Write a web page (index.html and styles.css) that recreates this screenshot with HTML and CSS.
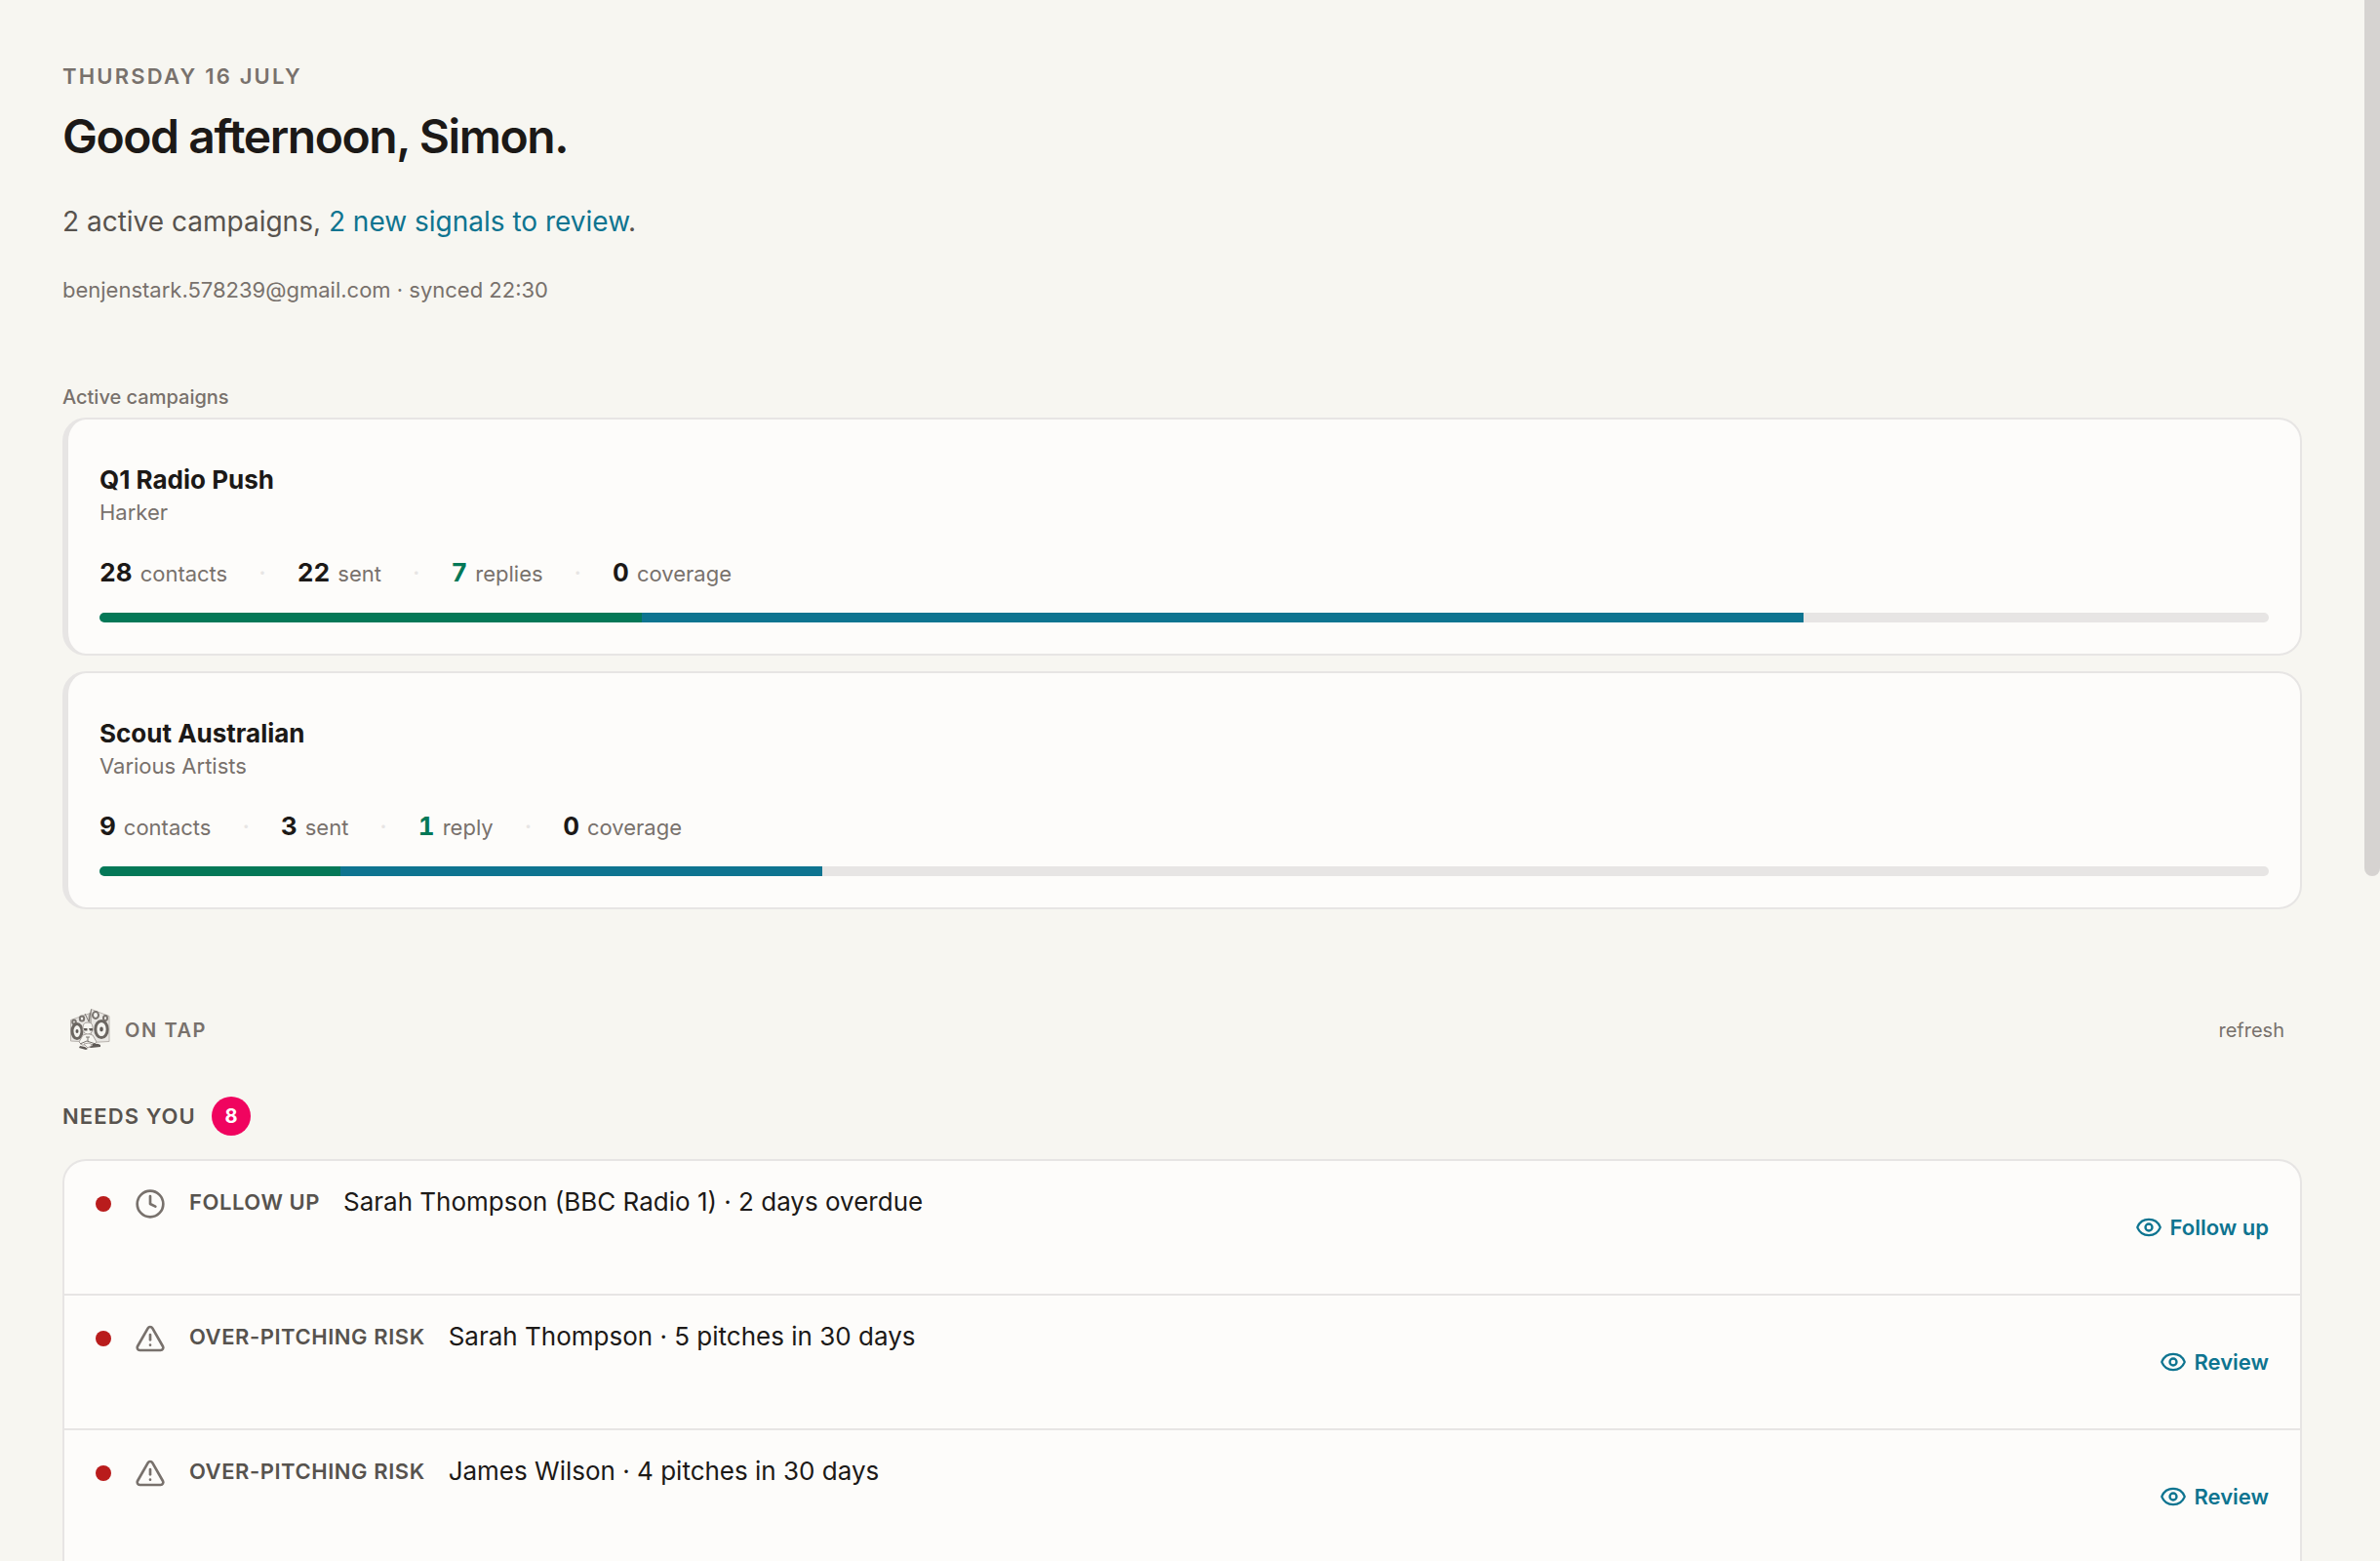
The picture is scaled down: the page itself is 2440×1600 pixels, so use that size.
FILE: index.html
```html
<!DOCTYPE html>
<html lang="en">
<head>
<meta charset="utf-8">
<title>Dashboard</title>
<link rel="stylesheet" href="styles.css">
</head>
<body>
<svg class="sprite" aria-hidden="true">
  <symbol id="clock" viewBox="0 0 24 24"><circle cx="12" cy="12" r="10"/><path d="M12 6v6l4 2"/></symbol>
  <symbol id="alert" viewBox="0 0 24 24"><path d="m21.73 18-8-14a2 2 0 0 0-3.48 0l-8 14A2 2 0 0 0 4 21h16a2 2 0 0 0 1.73-3"/><path d="M12 9v4"/><path d="M12 17h.01"/></symbol>
  <symbol id="eye" viewBox="0 0 24 24"><path d="M2.062 12.348a1 1 0 0 1 0-.696 10.75 10.75 0 0 1 19.876 0 1 1 0 0 1 0 .696 10.75 10.75 0 0 1-19.876 0"/><circle cx="12" cy="12" r="3"/></symbol>
</svg>
<main class="page">
  <header class="intro">
    <p class="date">Thursday 16 July</p>
    <h1 class="greeting">Good afternoon, Simon.</h1>
    <p class="summary">2 active campaigns, <a href="#signals">2 new signals to review</a>.</p>
    <p class="account">benjenstark.578239@gmail.com · synced 22:30</p>
  </header>

  <section class="campaigns">
    <h2 class="section-label">Active campaigns</h2>
    <article class="campaign">
      <h3 class="campaign-name">Q1 Radio Push</h3>
      <p class="artist">Harker</p>
      <ul class="stats">
        <li><b>28</b> contacts</li>
        <li><b>22</b> sent</li>
        <li><b class="good">7</b> replies</li>
        <li><b>0</b> coverage</li>
      </ul>
      <div class="bar"><span class="replied" style="width:25%"></span><span class="sent" style="width:53.57%"></span></div>
    </article>
    <article class="campaign">
      <h3 class="campaign-name">Scout Australian</h3>
      <p class="artist">Various Artists</p>
      <ul class="stats">
        <li><b>9</b> contacts</li>
        <li><b>3</b> sent</li>
        <li><b class="good">1</b> reply</li>
        <li><b>0</b> coverage</li>
      </ul>
      <div class="bar"><span class="replied" style="width:11.11%"></span><span class="sent" style="width:22.22%"></span></div>
    </article>
  </section>

  <section class="tap">
    <div class="tap-head">
      <!-- Character sitting in front of two stacked speakers -->
      <svg class="mascot" viewBox="0 0 56 56" aria-hidden="true">
        <path class="cab" d="M8.500 17.500 27 11v29l-18.500 -1z"/>
        <path class="cab" d="M29.500 6.500 48 13.500v26l-18.500 1z"/>
        <path class="crack" d="m23 11 4 8 2.500-12.500M28 10v12"/>
        <g class="cone">
          <ellipse cx="12" cy="19.500" rx="1.800" ry="2.100"/>
          <ellipse cx="20" cy="16" rx="2.200" ry="2.500"/>
          <ellipse cx="34" cy="12.500" rx="3" ry="3.400"/>
          <ellipse cx="44" cy="15.500" rx="2" ry="2.600"/>
        </g>
        <g class="woofer">
          <ellipse cx="15" cy="29" rx="5" ry="7.500"/>
          <ellipse cx="40" cy="27" rx="6.200" ry="8.500"/>
        </g>
        <g class="cap">
          <ellipse cx="15" cy="29" rx="1.500" ry="2"/>
          <ellipse cx="40" cy="27" rx="1.800" ry="2.400"/>
        </g>
        <path class="body" d="M21 33q5-3 10 0l4 7-3 3H20l-3-3z"/>
        <path class="body" d="M21 25q0-5 5-5t5 5v3q-1 4-5 4t-5-4z"/>
        <path class="crack" d="M24 35h4m-2 0v4M18 42l7-3 9 3"/>
        <path class="dark" d="M21.500 26h4v2.500h-3zM27 26h4v2.500h-3z"/>
        <path class="dark" d="M30 42q6-1 9 1v2l-10 1-4-2z"/>
        <path class="dark" d="m18 44 5 1 3 2-2 1-7-2z"/>
        <path class="body" d="m22 42 5-1 4 2-5 3z"/>
      </svg>
      <h2 class="tap-title">On tap</h2>
      <button class="refresh" type="button">refresh</button>
    </div>
    <div class="needs-head">
      <h3 class="needs-title">Needs you</h3>
      <span class="count">8</span>
    </div>
    <ul class="tasks">
      <li class="task">
        <div class="task-info"><span class="dot"></span><svg class="icon"><use href="#clock"/></svg><span class="kind">Follow up</span><span class="what">Sarah Thompson (BBC Radio 1) · 2 days overdue</span></div>
        <button class="action" type="button"><svg class="eye"><use href="#eye"/></svg>Follow up</button>
      </li>
      <li class="task">
        <div class="task-info"><span class="dot"></span><svg class="icon"><use href="#alert"/></svg><span class="kind">Over-pitching risk</span><span class="what">Sarah Thompson · 5 pitches in 30 days</span></div>
        <button class="action" type="button"><svg class="eye"><use href="#eye"/></svg>Review</button>
      </li>
      <li class="task">
        <div class="task-info"><span class="dot"></span><svg class="icon"><use href="#alert"/></svg><span class="kind">Over-pitching risk</span><span class="what">James Wilson · 4 pitches in 30 days</span></div>
        <button class="action" type="button"><svg class="eye"><use href="#eye"/></svg>Review</button>
      </li>
    </ul>
  </section>
</main>
<div class="scroll-thumb"></div>
</body>
</html>
```
FILE: styles.css
```css
* { box-sizing: border-box; margin: 0; padding: 0; }
body {
  height: 100vh;
  overflow: hidden;
  background: #f7f6f1;
  color: #1c1917;
  font-family: Inter, "Liberation Sans", sans-serif;
  font-size: 22px;
  line-height: 32px;
}
ul { list-style: none; }
button { border: 0; background: none; font: inherit; cursor: pointer; }
.sprite { display: none; }

.page { padding: 62px 80px 0 64px; }
.date { color: #78716c; font-weight: 600; letter-spacing: 0.1em; text-transform: uppercase; }
.greeting { margin-top: 16px; font-size: 48px; font-weight: 600; line-height: 60px; letter-spacing: -0.03em; }
.summary { margin-top: 35px; font-size: 28px; line-height: 44px; color: #57534e; }
.summary a { color: #0e7490; text-decoration: none; }
.account { margin-top: 32px; color: #78716c; }

.campaigns { display: flex; flex-direction: column; gap: 16px; margin-top: 79px; }
.section-label { margin-bottom: -10px; font-size: 20px; font-weight: 500; line-height: 30px; color: #78716c; }
.campaign {
  padding: 42px 32px 32px;
  border: 2px solid #e7e5e4;
  border-left-width: 6px;
  border-radius: 24px;
  background: #fdfcfa;
}
.campaign-name { font-size: 26px; font-weight: 700; line-height: 40px; }
.artist { line-height: 26px; color: #78716c; }
.stats { display: flex; height: 36px; margin-top: 31px; color: #78716c; line-height: 36px; }
.stats li { display: flex; align-items: baseline; gap: 8px; }
.stats b { font-size: 26px; font-weight: 700; font-variant-numeric: tabular-nums; color: #1c1917; }
.stats .good { color: #047857; }
.stats li + li::before { content: "·"; margin: 0 24px 0 32px; font-size: 26px; color: #e7e5e4; }
.bar { display: flex; height: 10px; margin-top: 23px; overflow: hidden; border-radius: 5px; background: #e7e5e4; }
.replied { background: #047857; }
.sent { background: #0e7490; }

.tap { margin-top: 96px; }
.tap-head { display: flex; align-items: center; gap: 8px; }
.mascot { width: 56px; height: 56px; }
.cab { fill: #e9e7e3; stroke: #b8b3ae; }
.cone { fill: #f5f4f0; stroke: #79746f; stroke-width: 2; }
.woofer { fill: #f5f4f0; stroke: #6b6661; stroke-width: 3; }
.cap, .dark { fill: #5f5a56; }
.body { fill: #f7f6f1; stroke: #a8a29e; }
.crack { fill: none; stroke: #79746f; }
.tap-title { font-size: 20px; font-weight: 600; letter-spacing: 0.08em; color: #78716c; text-transform: uppercase; }
.refresh { margin-left: auto; padding: 0 18px; font-size: 20px; color: #78716c; }
.needs-head { display: flex; align-items: center; gap: 16px; margin-top: 40px; }
.needs-title { font-size: 22px; font-weight: 600; letter-spacing: 0.05em; color: #57534e; text-transform: uppercase; }
.count { width: 40px; height: 40px; border-radius: 50%; background: #f0045f; color: #fff; font-size: 20px; font-weight: 700; line-height: 40px; text-align: center; }

.tasks { margin-top: 24px; border: 2px solid #e7e5e4; border-bottom: 0; border-radius: 24px 24px 0 0; background: #fdfcfa; }
.task { display: flex; align-items: center; justify-content: space-between; padding: 22px 32px; }
.task + .task { border-top: 2px solid #e7e5e4; }
.task-info { display: flex; align-items: center; gap: 24px; padding-bottom: 52px; line-height: 40px; }
.dot, .icon { margin-top: 4px; }
.dot { width: 16px; height: 16px; border-radius: 50%; background: #b91c1c; }
.icon, .eye { fill: none; stroke: currentColor; stroke-width: 2; stroke-linecap: round; stroke-linejoin: round; }
.icon { width: 32px; height: 32px; color: #78716c; }
.kind { font-weight: 600; letter-spacing: 0.025em; color: #57534e; text-transform: uppercase; }
.what { font-size: 26px; }
.action { display: flex; align-items: center; gap: 8px; color: #0e7490; font-weight: 600; }
.eye { width: 28px; height: 28px; }

.scroll-thumb { position: fixed; top: -8px; right: 0; width: 16px; height: calc(56vh + 10px); border-radius: 8px; background: #d6d3d1; }
```
